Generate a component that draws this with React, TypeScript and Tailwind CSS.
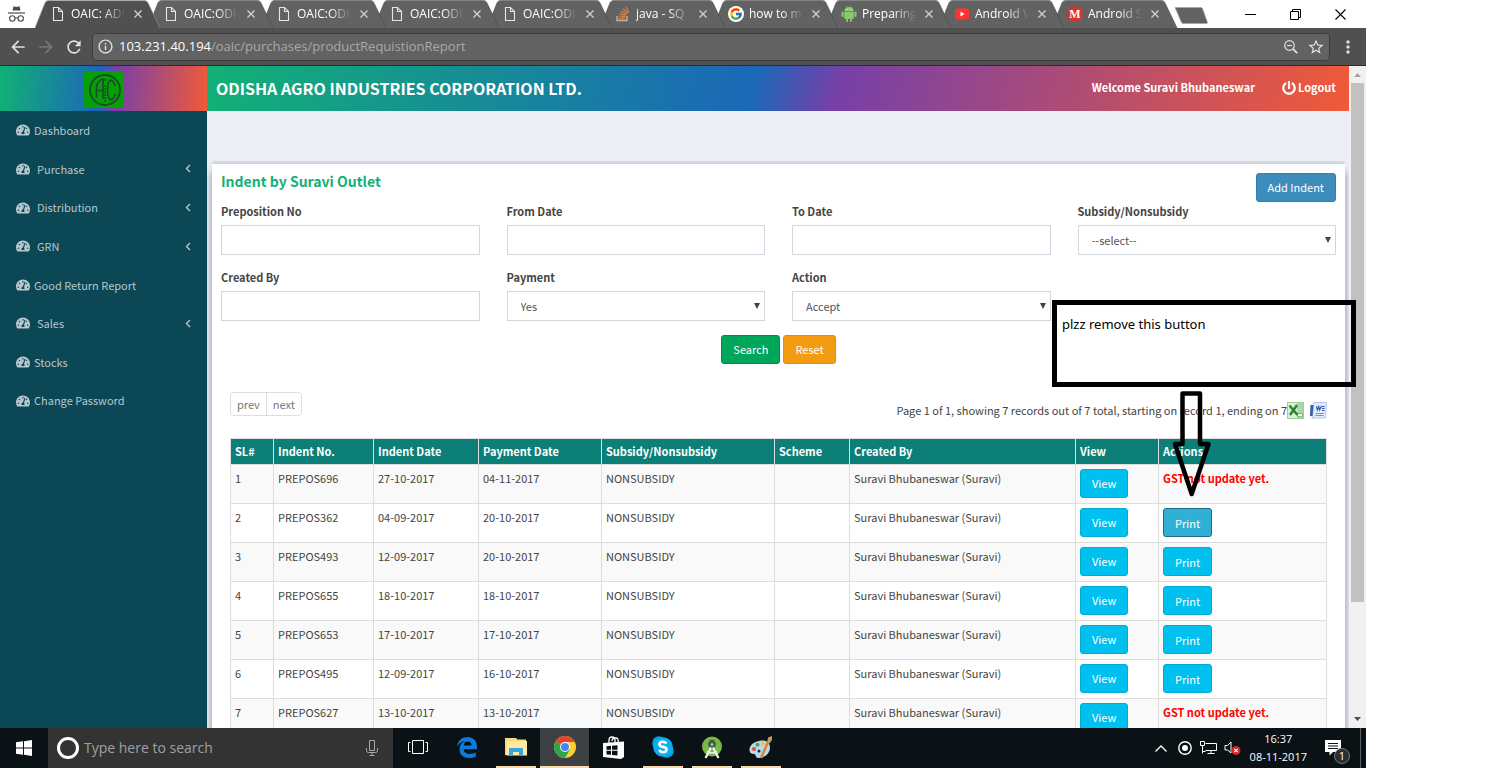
import type { ReactNode } from "react";
import { FaPowerOff, FaTachometerAlt } from "react-icons/fa";
import { MdArrowBack, MdArrowForward, MdRefresh, MdMoreVert, MdStarBorder, MdInfoOutline } from "react-icons/md";
import { FcGoogle } from "react-icons/fc";

const PAGE_FONT = "font-['Noto_Sans_CJK_SC',sans-serif]";
const UI_FONT = "font-['Open_Sans',sans-serif]";

/* ---------- browser tabs ---------- */

function PageIcon() {
  return (
    <svg viewBox="0 0 16 16" className="size-4" fill="none" stroke="#e6e6e6" strokeWidth="1.1">
      <path d="M3.5 1.500h5l4 4v9h-9z" />
      <path d="M8.500 1.500v4h4" />
    </svg>
  );
}

function StackIcon() {
  return (
    <svg viewBox="0 0 16 16" className="size-4" fill="none">
      <path d="M2 10v4.5h10V10" stroke="#bcbbbb" strokeWidth="1.3" />
      <path d="M3.7 12.3h6.6M3.8 10l6.5.7M4.4 7.5l6.3 1.9M5.8 5l5.6 3.3M8.2 2.7l4.2 4.9M11.2 1l2.2 5.8" stroke="#e8823a" strokeWidth="1.2" />
    </svg>
  );
}

function GoogleIcon() {
  return (
    <span className="flex size-4 items-center justify-center rounded-full bg-white">
      <FcGoogle className="size-[14px]" />
    </span>
  );
}

function AndroidIcon() {
  return (
    <svg viewBox="0 0 16 16" className="size-4" fill="#8bc970">
      <path d="M3.200 5.200Q3.400 2.400 5.700 1.500L5 .3l.5-.3.8 1.200q1.700-.5 3.400 0L10.500 0l.5.3-.7 1.200q2.300.9 2.500 3.700z" />
      <path d="M3.200 5.800h9.600v6.400q0 .8-.8.8h-1.200v2.200q0 .8-.9.800t-.9-.8V13H7v2.200q0 .8-.9.800t-.9-.8V13H4q-.8 0-.8-.8z" />
      <rect x=".5" y="5.600" width="2" height="5.400" rx="1" />
      <rect x="13.500" y="5.600" width="2" height="5.400" rx="1" />
      <circle cx="6" cy="3.400" r=".5" fill="#fff" />
      <circle cx="10" cy="3.400" r=".5" fill="#fff" />
    </svg>
  );
}

function YoutubeIcon() {
  return (
    <svg viewBox="0 0 16 16" className="size-4">
      <rect x="1" y="2.5" width="14" height="11" rx="2.5" fill="#f33" />
      <path d="M6.5 5.5v5l4-2.5z" fill="#fff" />
    </svg>
  );
}

function MemoIcon() {
  return (
    <svg viewBox="0 0 16 16" className="size-4">
      <path d="M8 0l7.5 3.5v9L8 16 .5 12.500v-9z" fill="#d8322f" />
      <text x="8" y="12.200" textAnchor="middle" fontSize="12" fontWeight="700" fontFamily="Liberation Serif, serif" fill="#fff">M</text>
    </svg>
  );
}

const TABS: { title: string; icon: ReactNode }[] = [
  { title: "OAIC: ADI", icon: <PageIcon /> },
  { title: "OAIC:ODI", icon: <PageIcon /> },
  { title: "OAIC:ODI", icon: <PageIcon /> },
  { title: "OAIC:ODI", icon: <PageIcon /> },
  { title: "OAIC:ODI", icon: <PageIcon /> },
  { title: "java - SQ", icon: <StackIcon /> },
  { title: "how to m", icon: <GoogleIcon /> },
  { title: "Preparing", icon: <AndroidIcon /> },
  { title: "Android V", icon: <YoutubeIcon /> },
  { title: "Android S", icon: <MemoIcon /> },
];

function Tab({ title, icon, active, order }: { title: string; icon: ReactNode; active: boolean; order: number }) {
  return (
    <div className="relative flex w-[113px] shrink-0 items-center pl-[15px]" style={{ zIndex: order }}>
      <svg viewBox="0 0 126 28" className="absolute top-0 left-0 h-7 w-[126px]" preserveAspectRatio="none">
        <path
          d="M0 28 L10 3 Q11 1 13 1 H110 Q112 1 113 3 L125 28 Z"
          fill={active ? "#505050" : "#626262"}
        />
        <path d="M0 28 L10 3 Q11 .5 13 .5 H110 Q112 .5 113 3 L125 28" fill="none" stroke={active ? "#8a8a8a" : "#4d4d4d"} strokeWidth="1" strokeOpacity=".7" />
      </svg>
      <span className="relative flex size-4 items-center justify-center">{icon}</span>
      <button className="relative ml-[5px] w-[54px] text-left text-xs whitespace-nowrap text-white [mask-image:linear-gradient(90deg,#000_60%,transparent)]">
        {title}
      </button>
      <button aria-label="Close tab" className="relative ml-2 p-px">
        <svg viewBox="0 0 8 8" className="size-2" stroke="#cfcfcf" strokeWidth="1.4">
          <path d="M.5.5l7 7M7.500.5l-7 7" />
        </svg>
      </button>
    </div>
  );
}

function TabStrip() {
  return (
    <div className="flex h-7 bg-white">
      <div className="flex w-[35px] items-center pl-2">
        <svg viewBox="0 0 17 16" className="h-4 w-[17px]" fill="none" stroke="#4a4a4a">
          <path d="M4.500 4.500L5.500.3l3 .8 3-.8 1 4.200z" fill="#4a4a4a" stroke="none" />
          <path d="M0 7h17" strokeWidth="1.200" />
          <circle cx="4.300" cy="12.500" r="2.700" strokeWidth="1.100" />
          <circle cx="12.700" cy="12.500" r="2.700" strokeWidth="1.100" />
          <path d="M7 12.200q1.500-1 3 0" strokeWidth="1.100" />
        </svg>
      </div>
      {TABS.map((t, i) => (
        <Tab key={i} {...t} active={i === 0} order={20 - i} />
      ))}
      <button aria-label="New tab" className="mt-[7px] ml-[9px] self-start">
        <svg viewBox="0 0 34 17" className="h-[17px] w-[34px]">
          <path d="M1 .5h26q1 0 1.500 1l5 14q0 1-1 1H9q-1 0-1.500-1z" fill="#626262" stroke="#a8a8a8" strokeWidth=".8" />
        </svg>
      </button>
      <div className="ml-auto flex items-center gap-[34px] pr-5 text-black">
        <button aria-label="Minimize">
          <svg viewBox="0 0 11 11" className="size-[11px]" stroke="currentColor"><path d="M0 5.500h11" /></svg>
        </button>
        <button aria-label="Restore">
          <svg viewBox="0 0 11 11" className="size-[11px]" stroke="currentColor" fill="none">
            <path d="M.5 2.500h8v8h-8zM2.500 2.500v-2h8v8h-2" />
          </svg>
        </button>
        <button aria-label="Close">
          <svg viewBox="0 0 11 11" className="size-[11px]" stroke="currentColor" strokeWidth="1.100"><path d="M.5.5l10 10M10.500.5l-10 10" /></svg>
        </button>
      </div>
    </div>
  );
}

function Toolbar() {
  return (
    <div className="flex h-[38px] items-center border-b border-[#2b2b2b] bg-[#505050] pl-2 text-[#e0e0e0]">
      <button aria-label="Back" className="mr-2"><MdArrowBack className="size-5" /></button>
      <button aria-label="Forward" className="mr-2 text-[#777]"><MdArrowForward className="size-5" /></button>
      <button aria-label="Reload" className="mr-2"><MdRefresh className="size-5" /></button>
      <div className="flex h-7 flex-1 items-center rounded-sm border border-[#3d3d3d] bg-[#626262] px-1">
        <MdInfoOutline className="mr-[5px] size-[17px]" />
        <div className="flex-1 text-[13px]"><span className="text-white">103.231.40.194</span><span className="text-[#a9a9a9]">/oaic/purchases/productRequistionReport</span></div>
        <svg viewBox="0 0 16 16" className="mr-2 size-4" fill="none" stroke="currentColor" strokeWidth="1.200">
          <circle cx="6.500" cy="6.500" r="4.800" />
          <path d="M4 6.500h5" />
          <path d="M10.200 10.200l4 4" strokeWidth="1.800" />
        </svg>
        <MdStarBorder className="size-[18px]" />
      </div>
      <button aria-label="Menu" className="mx-2"><MdMoreVert className="size-5" /></button>
    </div>
  );
}

/* ---------- page ---------- */

const MENU = [
  { label: "Dashboard" },
  { label: "Purchase", sub: true },
  { label: "Distribution", sub: true },
  { label: "GRN", sub: true },
  { label: "Good Return Report" },
  { label: "Sales", sub: true },
  { label: "Stocks" },
  { label: "Change Password" },
];

function AgroLogo() {
  return (
    <svg viewBox="0 0 40 37" className="h-[37px] w-10">
      <rect width="40" height="37" fill="#04a004" />
      <g fill="none" stroke="#1d4a2c">
        <circle cx="21" cy="19" r="15" strokeWidth="1.800" />
        <path d="M12.500 27V15q2-6 6.500-7V28M12.500 19.500H19" strokeWidth="1.600" />
        <path d="M31 15q-1-5-4.500-6-3 2-3 10t3 10q3.500-1 4.500-6" strokeWidth="1.600" />
        <path d="M21.200 8v3M21.200 14v17" strokeWidth="1.600" strokeDasharray="2 1" />
      </g>
    </svg>
  );
}

function Sidebar() {
  return (
    <aside className="w-[207px] shrink-0 bg-[#0b4754]">
      <div className="flex h-[45px] items-center justify-center pt-[2px] bg-[linear-gradient(95deg,#12b175_0%,#1b67b8_48%,#7640a8_55%,#f15a38_100%)]">
        <AgroLogo />
      </div>
      <ul className="grid h-[309px] grid-rows-8 text-[11px] text-[#b8c7ce]">
        {MENU.map((m) => (
          <li key={m.label} className="flex">
            <a href="#" className="flex flex-1 items-center px-4">
              <FaTachometerAlt className="size-[14px]" />
              <span className={m.sub ? "ml-[7px] flex-1" : "ml-1 flex-1"}>{m.label}</span>
              {m.sub && (
                <svg viewBox="0 0 6 9" className="h-[9px] w-[6px]" fill="none" stroke="currentColor" strokeWidth="1.400"><path d="M5 1L1.500 4.500 5 8" /></svg>
              )}
            </a>
          </li>
        ))}
      </ul>
    </aside>
  );
}

function Field({ id, label, options }: { id: string; label: string; options?: string[] }) {
  return (
    <div>
      <label htmlFor={id} className="mb-1 block text-[11px] leading-5 font-bold text-[#444]">{label}</label>
      {options ? (
        <div className="relative">
          <select id={id} className="block h-[30px] w-full appearance-none border border-[#d2d6de] bg-white px-[13px] text-[11px] text-[#555]">
            {options.map((o) => (
              <option key={o}>{o}</option>
            ))}
          </select>
          <svg viewBox="0 0 6 6" className="pointer-events-none absolute top-3 right-[5px] size-[6px]" fill="#444"><path d="M0 0h6L3 6z" /></svg>
        </div>
      ) : (
        <input id={id} type="text" className="block h-[30px] w-full border border-[#d2d6de] bg-white px-3 text-[11px] text-[#555]" />
      )}
    </div>
  );
}

function Btn({ children, className }: { children: ReactNode; className: string }) {
  return (
    <button className={`h-[29px] rounded-[3px] border px-[11px] text-[11px] text-white ${className}`}>{children}</button>
  );
}

const ROWS = [
  ["1", "PREPOS696", "27-10-2017", "04-11-2017"],
  ["2", "PREPOS362", "04-09-2017", "20-10-2017"],
  ["3", "PREPOS493", "12-09-2017", "20-10-2017"],
  ["4", "PREPOS655", "18-10-2017", "18-10-2017"],
  ["5", "PREPOS653", "17-10-2017", "17-10-2017"],
  ["6", "PREPOS495", "12-09-2017", "16-10-2017"],
  ["7", "PREPOS627", "13-10-2017", "13-10-2017"],
];
const HEADS = [
  ["SL#", "w-[43px]"],
  ["Indent No.", "w-[100px]"],
  ["Indent Date", "w-[105px]"],
  ["Payment Date", "w-[123px]"],
  ["Subsidy/Nonsubsidy", "w-[173px]"],
  ["Scheme", "w-[75px]"],
  ["Created By", ""],
  ["View", "w-[83px]"],
  ["Actions", "w-[168px]"],
];
const NOT_UPDATED = ["1", "7"];
const CELL = "border border-[#ddd] px-1 align-top";

function IndentTable() {
  return (
    <table className="w-full table-fixed border-collapse text-left text-[11px] text-[#444]">
      <thead>
        <tr className="h-[26px] bg-[#0c7f78] text-white">
          {HEADS.map(([h, w]) => (
            <th key={h} className={`border border-[#ddd] px-1 font-bold ${w}`}>{h}</th>
          ))}
        </tr>
      </thead>
      <tbody>
        {ROWS.map((r, i) => (
          <tr key={r[0]} className="h-[39px] odd:bg-[#f9f9f9] even:bg-white">
            {r.map((c, j) => (
              <td key={j} className={`${CELL} pt-1 leading-[18px]`}>{c}</td>
            ))}
            <td className={`${CELL} pt-1 leading-[18px]`}>NONSUBSIDY</td>
            <td className={CELL} />
            <td className={`${CELL} pt-1 leading-[18px]`}>Suravi Bhubaneswar (Suravi)</td>
            <td className={`${CELL} pt-1`}>
              <Btn className="block border-[#00acd6] bg-[#00c0ef]">View</Btn>
            </td>
            <td className={`${CELL} pt-1 leading-[18px]`}>
              {NOT_UPDATED.includes(r[0]) ? (
                <span className="font-bold text-[#f00]">GST not update yet.</span>
              ) : (
                <Btn className={i === 1 ? "block border-[#1b6d85] bg-[#31b0d5]" : "block border-[#00acd6] bg-[#00c0ef]"}>Print</Btn>
              )}
            </td>
          </tr>
        ))}
      </tbody>
    </table>
  );
}

function ExcelIcon() {
  return (
    <svg viewBox="0 0 17 17" className="size-[17px]">
      <rect x=".5" y=".5" width="16" height="16" fill="#d9efd6" stroke="#9ccf97" />
      <path d="M10 1h6v15h-6z" fill="#a9d6a4" />
      <path d="M10.500 11.500h5v3h-5z" fill="#e9f6e8" stroke="#6fb26a" strokeWidth=".8" />
      <path d="M2.500 3.500l8 9.500M10 3L3 13" stroke="#26852d" strokeWidth="2.400" />
    </svg>
  );
}

function WordIcon() {
  return (
    <svg viewBox="0 0 17 17" className="size-[17px]">
      <path d="M4 .5h12.500L15.500 16H2z" fill="#e3ebf8" stroke="#b4c4e4" />
      <path d="M.5 3h3L2.500 14H0z" fill="#2e5db5" />
      <path d="M6.500 4l.8 4 1.500-3.500.8 3.500L11.500 4M12 4.500h2.500M12 6.500h2.500M12 8.500h2.500" stroke="#2b57ad" strokeWidth="1.100" fill="none" />
      <path d="M5.500 11.500h8.500M5.500 13.500h8" stroke="#6f93d4" strokeWidth="1" />
    </svg>
  );
}

function Main() {
  return (
    <main className="flex min-w-0 flex-1 flex-col overflow-hidden bg-[#ecf0f5]">
      <header className="flex h-[45px] shrink-0 items-center bg-[linear-gradient(105deg,#12b175_0%,#1b67b8_48%,#7640a8_55%,#f15a38_100%)] pr-[13px] pb-[2px] pl-[9px] font-bold text-white">
        <h1 className="flex-1 text-base">ODISHA AGRO INDUSTRIES CORPORATION LTD.</h1>
        <span className="text-[11px]">Welcome Suravi Bhubaneswar</span>
        <a href="#" className="ml-[27px] flex items-center gap-[2px] text-[11px]">
          <FaPowerOff className="size-[14px]" />
          Logout
        </a>
      </header>
      <section className="mx-[5px] mt-[50px] mr-1 rounded-t-[3px] border-t-[3px] border-[#d2d6de] bg-white px-[9px] pt-[9px] shadow-[0_10px_8px_rgba(40,40,80,0.5)]">
        <div className="flex h-7 items-start justify-between">
          <h2 className="text-sm leading-4 font-bold text-[#12b175]">Indent by Suravi Outlet</h2>
          <Btn className="border-[#367fa9] bg-[#3c8dbc]">Add Indent</Btn>
        </div>
        <form className="grid grid-cols-4 gap-x-[27px] gap-y-3" onSubmit={(e) => e.preventDefault()}>
          <Field id="preposition" label="Preposition No" />
          <Field id="from" label="From Date" />
          <Field id="to" label="To Date" />
          <Field id="subsidy" label="Subsidy/Nonsubsidy" options={["--select--"]} />
          <Field id="created" label="Created By" />
          <Field id="payment" label="Payment" options={["Yes", "No"]} />
          <Field id="action" label="Action" options={["Accept", "Reject"]} />
          <div className="col-span-4 mt-[2px] flex justify-center gap-[3px]">
            <Btn className="border-[#008d4c] bg-[#00a65a]">Search</Btn>
            <Btn className="border-[#e08e0b] bg-[#f39c12]">Reset</Btn>
          </div>
        </form>
        <div className="mt-7 flex items-start justify-between px-[9px] text-[11px]">
          <nav className="flex h-6 rounded border border-[#ddd] leading-[22px] text-[#777]">
            <a href="#" className="border-r border-[#ddd] px-[6px]">prev</a>
            <a href="#" className="px-[6px]">next</a>
          </nav>
          <div className="flex h-9 items-center text-[#444]">
            <span>Page 1 of 1, showing 7 records out of 7 total, starting on record 1, ending on 7</span>
            <a href="#" aria-label="Export to Excel"><ExcelIcon /></a>
            <a href="#" aria-label="Export to Word" className="ml-[6px]"><WordIcon /></a>
          </div>
        </div>
        <div className="mt-[10px] px-[9px] pb-4">
          <IndentTable />
        </div>
      </section>
    </main>
  );
}

function ScrollTrack() {
  return (
    <div className="flex w-[17px] shrink-0 flex-col items-center bg-[#f1f1f1]">
      <svg viewBox="0 0 17 17" className="size-[17px]"><path d="M5 11l3.500-4 3.500 4z" fill="#a3a3a3" /></svg>
      <div className="h-[519px] w-[13px] bg-[#c1c1c1]" />
      <svg viewBox="0 0 17 17" className="mt-auto size-[17px]"><path d="M5 6l3.500 4L12 6z" fill="#505050" /></svg>
    </div>
  );
}

/* ---------- taskbar ---------- */

function TaskItem({ children, label, running, active }: { children: ReactNode; label: string; running?: boolean; active?: boolean }) {
  return (
    <button aria-label={label} className={`flex w-[49px] flex-col items-center ${active ? "bg-[#3d4144]" : ""}`}>
      <span className="flex flex-1 items-center">{children}</span>
      <span className={`h-[2px] ${active ? "w-full" : "w-10"} ${running ? "bg-[#fbd9ae]" : ""}`} />
    </button>
  );
}

function Taskbar() {
  return (
    <footer className={`flex h-10 shrink-0 bg-[#0a1216] text-white ${UI_FONT}`}>
      <button aria-label="Start" className="flex w-12 items-center justify-center">
        <svg viewBox="0 0 16 16" className="size-4" fill="#fff"><path d="M0 2.300l7-1v6.200H0zM8 1.200L16 0v7.500H8zM0 8.500h7v6.200l-7-1zM8 8.500h8V16l-8-1.200z" /></svg>
      </button>
      <label className="flex w-[345px] items-center bg-[#333] pr-[15px] pl-[9px]">
        <span className="size-[22px] rounded-full border-[3px] border-white" />
        <input type="text" aria-label="Search" placeholder="Type here to search" className="ml-[5px] min-w-0 flex-1 text-sm placeholder:text-[#a0a0a0]" />
        <svg viewBox="0 0 12 16" className="h-4 w-3" fill="none" stroke="#a8a8a8"><path d="M3.500.5h5v10h-5zM.5 8v2.500q0 2 2 2h7q2 0 2-2V8M6 12.500v3M3.500 15.500h5" /></svg>
      </label>
      <TaskItem label="Task view">
        <svg viewBox="0 0 20 14" className="h-[14px] w-5" fill="none" stroke="#fff" strokeWidth="1"><path d="M4.500.5h11v13h-11zM2.500 2.500h-2v9h2M17.500 2.500h2v9h-2" /></svg>
      </TaskItem>
      <TaskItem label="Edge">
        <svg viewBox="0 0 20 21" className="h-[21px] w-5" fill="#0c7cdb"><path d="M0 9.500C.8 4 4.500 0 10.300 0 16.500 0 20 4.300 20 10v2.300H6.700c.2 3.300 3 4.700 6 4.700 2.300 0 4.300-.6 6.100-1.700v4.200c-2 1.100-4.500 1.500-6.900 1.500-6 0-9.400-3.600-9.400-8.700 0-3.800 2-6.700 5.300-8.200C4.200 4.700 1.500 6.700 0 9.500zM6.800 8.600h7.700c0-2.500-1.300-4-3.800-4-2.300 0-3.700 1.500-3.900 4z" /></svg>
      </TaskItem>
      <TaskItem label="File Explorer" running>
        <svg viewBox="0 0 22 18" className="h-[18px] w-[22px]"><path d="M0 0h11l1.500 1.500H21V17H0z" fill="#f7d978" /><path d="M1.500 3H22v14.500H1.500z" fill="#ffe9a0" /><path d="M4 18v-7q0-1 1-1h12q1 0 1 1v7h-4v-4H8v4z" fill="#37a6e0" /></svg>
      </TaskItem>
      <TaskItem label="Chrome" running active>
        <svg viewBox="0 0 22 22" className="size-[22px]">
          <circle cx="11" cy="11" r="11" fill="#fdd032" />
          <path d="M11 11L1.500 5.500A11 11 0 0 1 20.500 5.500L21 6H11z" fill="#e14434" />
          <path d="M11 11L1.500 5.500A11 11 0 0 0 11 22l5-8.500z" fill="#2da44e" />
          <circle cx="11" cy="11" r="5" fill="#fff" />
          <circle cx="11" cy="11" r="4" fill="#4285f4" />
        </svg>
      </TaskItem>
      <TaskItem label="Store">
        <svg viewBox="0 0 21 23" className="h-[23px] w-[21px]"><path d="M6 7V4q0-3 3-3t3 3v3M9 5q0-3 3.500-3T15 6" fill="none" stroke="#fff" strokeWidth="1.300" /><path d="M0 7l21-1.500V21l-3 2L0 21z" fill="#fff" /><path d="M3.500 10.200l4.500-.4v4H3.500zM9 9.700l5.500-.5v4.600H9zM3.500 14.800H8v4l-4.500-.4zM9 14.800h5.500v4.700L9 19z" fill="#0a1216" /></svg>
      </TaskItem>
      <TaskItem label="Skype" running>
        <svg viewBox="0 0 22 22" className="size-[22px]"><circle cx="7" cy="7" r="6.800" fill="#00a4e4" /><circle cx="15" cy="15" r="6.800" fill="#00a4e4" /><circle cx="11" cy="11" r="9.800" fill="#0cafef" /><path d="M14.500 7.500Q13 5.800 10.800 5.800 7.300 6 7.400 8.300 7.600 10.300 11 10.900 14.600 11.600 14.600 13.600 14.300 16 11 16.200 8.500 16.200 7.200 14" fill="none" stroke="#fff" strokeWidth="2.600" /></svg>
      </TaskItem>
      <TaskItem label="Android Studio" running>
        <svg viewBox="0 0 22 23" className="h-[23px] w-[22px]"><circle cx="11" cy="10.500" r="10" fill="#78b943" /><path d="M8 5q1-1.500 3-1.500T14 5l1 3q0 4-4 4T7 8z" fill="#4a5a4a" /><circle cx="11" cy="8.500" r="1.300" fill="#b5cfa0" /><path d="M10 11.500L4.500 22M12 11.500L17.500 22" stroke="#f2f2f2" strokeWidth="2.200" /><path d="M6 15.500q5 3 10 0" stroke="#f2f2f2" strokeWidth="1.500" fill="none" /></svg>
      </TaskItem>
      <TaskItem label="Paint" running>
        <svg viewBox="0 0 24 23" className="h-[23px] w-6"><path d="M10 5c6-1.500 11 1 11 6.500S16 22 9.500 22C6 22 7.500 18.500 5 18 2 17.800.3 16.500.5 13.500.8 9 4.500 6.300 10 5z" fill="#b9d9ea" /><circle cx="5" cy="13" r="2" fill="#e0493b" /><circle cx="8.500" cy="8.800" r="2" fill="#4aa94f" /><circle cx="14" cy="7.500" r="2" fill="#f0c23c" /><circle cx="10" cy="15" r="1.500" fill="#1b2a33" /><path d="M12 22L20 4" stroke="#d98232" strokeWidth="2.400" /><path d="M18.500 6l.5-4.500L23 0v4l-2.500 3.500z" fill="#c69a63" /></svg>
      </TaskItem>
      <div className="ml-auto flex items-center">
        <svg viewBox="0 0 12 7" className="h-[7px] w-3" fill="none" stroke="#fff" strokeWidth="1.300"><path d="M.5 6.500L6 1l5.500 5.500" /></svg>
        <svg viewBox="0 0 14 14" className="ml-[11px] size-[14px]"><circle cx="7" cy="7" r="6.200" fill="none" stroke="#fff" strokeWidth="1.400" /><circle cx="7" cy="7" r="3" fill="#fff" /></svg>
        <svg viewBox="0 0 17 14" className="ml-2 h-[14px] w-[17px]" fill="none" stroke="#fff"><path d="M5.500 2.500h11v7h-11M11 9.500v3M7.500 12.500h7M.5.500h4v4h-4zM2.500 4.500v8M2.500 10.500h3" /></svg>
        <svg viewBox="0 0 17 16" className="ml-[7px] h-4 w-[17px]"><path d="M1 5.500h2.500L7 2v11L3.500 10H1z" fill="none" stroke="#fff" /><circle cx="12" cy="10.500" r="4.500" fill="#d9242b" /><path d="M10.300 8.800l3.400 3.400M13.700 8.800l-3.400 3.400" stroke="#fff" strokeWidth="1.200" /></svg>
        <div className="ml-[9px] text-center text-[11px] leading-[18px]">
          <div>16:37</div>
          <div>08-11-2017</div>
        </div>
        <div className="relative mr-[10px] ml-[18px] h-6 w-[25px]">
          <svg viewBox="0 0 16 16" className="mt-1 size-4"><path d="M0 0h16v12H8l-3.500 3.500V12H0z" fill="#fff" /><path d="M3 3.500h10M3 6h10M3 8.500h10" stroke="#0a1216" strokeWidth="1.200" /></svg>
          <span className="absolute right-0 -bottom-1 flex size-4 items-center justify-center rounded-full border border-[#777] bg-[#2b2f32] text-[11px]">1</span>
        </div>
        <div className="h-10 w-[6px] border-l border-[#5b6063]" />
      </div>
    </footer>
  );
}

/* ---------- note drawn over the page ---------- */

function Note() {
  return (
    <>
      <div className="absolute top-[300px] right-[136px] z-30 h-[87px] w-[304px] border-[5px] border-black px-[5px] py-[10px] font-['Noto_Sans',sans-serif] text-[13px] leading-[18px] text-black">
        plzz remove this button
      </div>
      <svg viewBox="0 0 40 108" className="absolute top-[390px] right-[280px] z-30 h-[108px] w-10" fill="none" stroke="#000" strokeWidth="4.500" strokeLinejoin="round">
        <path d="M10.500 3.500h17.500v50.500h8.500L19.700 104 3 54h7.500z" />
      </svg>
    </>
  );
}

export default function App() {
  return (
    <div className="relative flex h-screen flex-col overflow-hidden bg-white pr-[126px]">
      <div className={`shrink-0 ${UI_FONT}`}>
        <TabStrip />
        <Toolbar />
      </div>
      <div className={`flex min-h-0 flex-1 ${PAGE_FONT}`}>
        <Sidebar />
        <Main />
        <ScrollTrack />
      </div>
      <Taskbar />
      <Note />
    </div>
  );
}
